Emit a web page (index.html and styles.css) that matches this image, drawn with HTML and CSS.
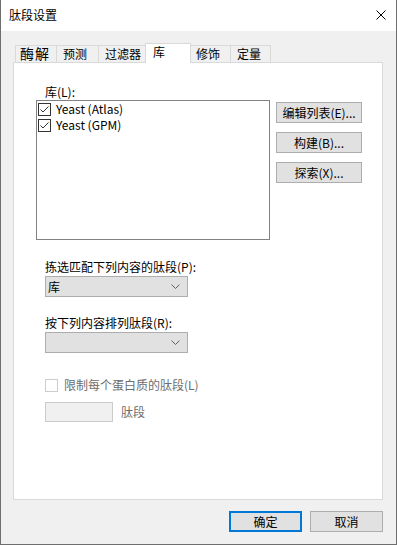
FILE: index.html
```html
<!DOCTYPE html>
<html lang="zh-CN">
<head>
<meta charset="utf-8">
<title>肽段设置</title>
<link rel="stylesheet" href="styles.css">
</head>
<body>
<div class="window">
  <div class="titlebar">
    <span class="title">肽段设置</span>
    <svg class="close" width="10" height="10" viewBox="0 0 10 10"><path d="M0.5 0.5 L9.5 9.5 M9.5 0.5 L0.5 9.5" stroke="#000" stroke-width="1" fill="none"/></svg>
  </div>
  <div class="client">
    <div class="tabs">
      <div class="tab t1"><span class="wide">酶解</span></div>
      <div class="tab t2">预测</div>
      <div class="tab t3">过滤器</div>
      <div class="tab sel">库</div>
      <div class="tab t5">修饰</div>
      <div class="tab t6">定量</div>
    </div>
    <div class="panel">
      <div class="lbl">库(L):</div>
      <div class="librow">
        <div class="listbox">
          <div class="item"><span class="lcb"><svg width="11" height="11" viewBox="0 0 11 11"><path d="M1.5 5.5 L4 8 L9.5 2.5" stroke="#333" stroke-width="1" fill="none"/></svg></span><span>Yeast (Atlas)</span></div>
          <div class="item"><span class="lcb"><svg width="11" height="11" viewBox="0 0 11 11"><path d="M1.5 5.5 L4 8 L9.5 2.5" stroke="#333" stroke-width="1" fill="none"/></svg></span><span>Yeast (GPM)</span></div>
        </div>
        <div class="btncol">
          <div class="btn">编辑列表(E)...</div>
          <div class="btn">构建(B)...</div>
          <div class="btn">探索(X)...</div>
        </div>
      </div>
      <div class="lbl lbl2">拣选匹配下列内容的肽段(P):</div>
      <div class="combo"><span>库</span><svg width="9" height="5" viewBox="0 0 9 5"><path d="M0.5 0.5 L4.5 4.5 L8.5 0.5" stroke="#606060" stroke-width="1" fill="none"/></svg></div>
      <div class="lbl lbl3">按下列内容排列肽段(R):</div>
      <div class="combo"><span></span><svg width="9" height="5" viewBox="0 0 9 5"><path d="M0.5 0.5 L4.5 4.5 L8.5 0.5" stroke="#606060" stroke-width="1" fill="none"/></svg></div>
      <div class="checkrow"><span class="dcb"></span><span class="dis">限制每个蛋白质的肽段(L)</span></div>
      <div class="textrow"><span class="dtext"></span><span class="dis">肽段</span></div>
    </div>
    <div class="footer">
      <div class="btn bbtn default">确定</div>
      <div class="btn bbtn">取消</div>
    </div>
  </div>
</div>
</body>
</html>
```

FILE: styles.css
```css
* { box-sizing: border-box; }
html, body { margin: 0; padding: 0; background: #fff; }
body {
  font-family: "Noto Sans CJK SC", "Liberation Sans", sans-serif;
  font-size: 12px;
  color: #000;
}
.window {
  width: 397px;
  height: 545px;
  border: 1px solid #6e6e6e;
  border-top: none;
  display: flex;
  flex-direction: column;
}
.titlebar {
  height: 31px;
  background: #fff;
  display: flex;
  align-items: center;
  padding-left: 8px;
}
.title { line-height: 16px; margin-top: -1px; }
.close { margin-left: auto; margin-right: 10px; margin-top: -1px; }
.client {
  flex: 1;
  background: #f0f0f0;
  display: flex;
  flex-direction: column;
}
.tabs {
  margin-top: 12px;
  padding-left: 14px;
  height: 19px;
  display: flex;
  align-items: flex-end;
}
.tab {
  height: 17px;
  border: 1px solid #d9d9d9;
  border-bottom: none;
  background: #f0f0f0;
  line-height: 15px;
  padding-left: 6px;
  margin-left: -1px;
  white-space: nowrap;
}
.t1 { width: 42px; margin-left: 0; padding-left: 4px; }
.t2 { width: 43px; }
.t3 { width: 50px; }
.sel {
  width: 46px;
  height: 20px;
  margin-left: -3px;
  margin-bottom: -1px;
  background: #fff;
  line-height: 16px;
  padding-left: 7px;
  position: relative;
  z-index: 2;
}
.t5 { width: 41px; padding-left: 5px; }
.t6 { width: 41px; }
.wide { font-size: 14px; line-height: 15px; font-weight: 400; letter-spacing: 1px; }
.panel {
  margin-left: 12px;
  width: 370px;
  height: 438px;
  border: 1px solid #d9d9d9;
  background: #fff;
  padding: 21px 0 0 22px;
  display: flex;
  flex-direction: column;
  align-items: flex-start;
}
.lbl { margin-left: 9px; line-height: 16px; }
.librow { display: flex; gap: 6px; }
.listbox {
  width: 234px;
  height: 140px;
  border: 1px solid #828282;
  background: #fff;
}
.item {
  height: 16px;
  display: flex;
  align-items: center;
  gap: 5px;
  padding-left: 1px;
  line-height: 16px;
}
.lcb {
  width: 13px;
  height: 13px;
  border: 1px solid #333;
  display: flex;
  align-items: center;
  justify-content: center;
}
.btncol {
  display: flex;
  flex-direction: column;
  gap: 9px;
  margin-top: 2px;
}
.btn {
  width: 86px;
  height: 21px;
  background: #e1e1e1;
  border: 1px solid #adadad;
  display: flex;
  align-items: center;
  justify-content: center;
  line-height: 16px;
}
.lbl2 { margin-top: 19px; }
.lbl3 { margin-top: 18px; }
.combo {
  margin-left: 9px;
  margin-top: 1px;
  width: 143px;
  height: 21px;
  border: 1px solid #adadad;
  background: #e1e1e1;
  display: flex;
  align-items: center;
  justify-content: space-between;
  padding: 0 7px 0 2px;
  line-height: 16px;
}
.checkrow {
  margin-left: 9px;
  margin-top: 24px;
  height: 16px;
  display: flex;
  align-items: center;
  gap: 6px;
}
.dcb {
  width: 13px;
  height: 13px;
  border: 1px solid #cccccc;
  background: #fff;
}
.dis { color: #6d6d6d; line-height: 16px; }
.textrow {
  margin-left: 9px;
  margin-top: 9px;
  display: flex;
  align-items: center;
  gap: 8px;
}
.dtext {
  width: 68px;
  height: 20px;
  border: 1px solid #cccccc;
  background: #f0f0f0;
}
.footer {
  margin-top: 11px;
  display: flex;
  justify-content: flex-end;
  gap: 8px;
  padding-right: 13px;
}
.bbtn { width: 73px; }
.default { border: 2px solid #0078d7; }
```
